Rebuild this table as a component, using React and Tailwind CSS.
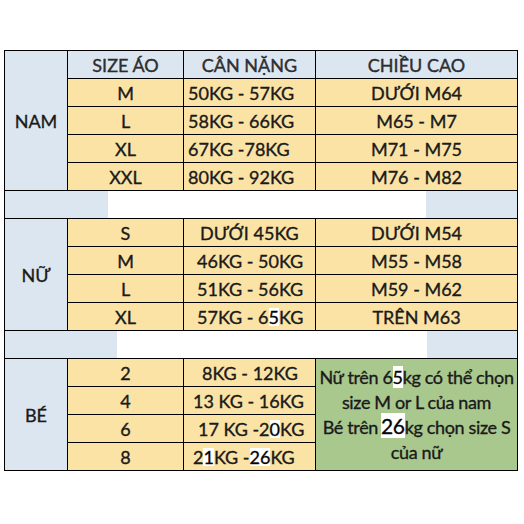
import React from "react";

const BLUE = "bg-[#dce6f1]";
const GOLD = "bg-[#fbe3a5]";

// a white patch over a character, like the edits in the source chart
function Fix({ children, className = "" }) {
  return <span className={`bg-white text-black ${className}`}>{children}</span>;
}

const nam = [
  { size: "M", kg: "50KG - 57KG", pl: "pl-[4px]", cao: "DƯỚI M64" },
  { size: "L", kg: "58KG - 66KG", pl: "pl-[4px]", cao: "M65 - M7" },
  { size: "XL", kg: "67KG -78KG", pl: "pl-[4px]", cao: "M71 - M75" },
  { size: "XXL", kg: "80KG - 92KG", pl: "pl-[4px]", cao: "M76 - M82" },
];

const nu = [
  { size: "S", kg: "DƯỚI 45KG", pl: "pl-[16px]", cao: "DƯỚI M54" },
  { size: "M", kg: "46KG - 50KG", pl: "pl-[13px]", cao: "M55 - M58" },
  { size: "L", kg: "51KG - 56KG", pl: "pl-[13px]", cao: "M59 - M62" },
  { size: "XL", kg: <>57KG - 6<Fix>5</Fix>KG</>, pl: "pl-[13px]", cao: "TRÊN M63" },
];

const be = [
  { size: "2", kg: "8KG - 12KG", pl: "pl-[18px]" },
  { size: "4", kg: "13 KG - 16KG", pl: "pl-[9px]" },
  { size: "6", kg: <>17 KG -2<Fix>0</Fix>KG</>, pl: "pl-[14px]" },
  { size: "8", kg: <>2<Fix>1</Fix> KG -<Fix>26</Fix>KG</>, pl: "pl-[9px]" },
];

function Cell({ className = "", children }) {
  return <div className={`flex items-center ${className}`}>{children}</div>;
}

function Rows({ rows }) {
  return rows.map((r, i) => (
    <React.Fragment key={i}>
      <Cell className={`${GOLD} justify-center`}>{r.size}</Cell>
      <Cell className={`${GOLD} ${r.pl} whitespace-nowrap`}>{r.kg}</Cell>
      {r.cao && <Cell className={`${GOLD} justify-center`}>{r.cao}</Cell>}
    </React.Fragment>
  ));
}

function Spacer({ left, right }) {
  return (
    <div className="col-span-4 flex">
      <div className={`${BLUE} ${left}`} />
      <div className="flex-1 bg-white" />
      <div className={`${BLUE} ${right}`} />
    </div>
  );
}

export default function App() {
  return (
    <div className="w-[524px] h-[524px] bg-white pt-[50px] pl-[4px] font-['Lato',sans-serif] text-[18px] text-[#1a1a1a] [-webkit-text-stroke:0.35px_#1a1a1a]">
      <div className="grid w-[514px] grid-cols-[62px_115px_131px_201px] grid-rows-[repeat(15,27px)] gap-px bg-black p-px leading-none">
        <Cell className={`${BLUE} row-span-5 justify-center`}>NAM</Cell>
        <Cell className={`${BLUE} justify-center text-[#333]`}>SIZE ÁO</Cell>
        <Cell className={`${BLUE} justify-center text-[#333]`}>CÂN NẶNG</Cell>
        <Cell className={`${BLUE} justify-center text-[#333]`}>CHIỀU CAO</Cell>
        <Rows rows={nam} />

        <Spacer left="w-[103px]" right="w-[91px]" />

        <Cell className={`${BLUE} row-span-4 justify-center`}>NỮ</Cell>
        <Rows rows={nu} />

        <Spacer left="w-[112px]" right="w-[90px]" />

        <Cell className={`${BLUE} row-span-4 justify-center`}>BÉ</Cell>
        {be.map((r, i) => (
          <React.Fragment key={i}>
            <Cell className={`${GOLD} justify-center`}>{r.size}</Cell>
            <Cell className={`${GOLD} ${r.pl} whitespace-nowrap`}>{r.kg}</Cell>
            {i === 0 && (
              <div className="row-span-4 flex flex-col items-center justify-center whitespace-nowrap bg-[#a9c88e] text-[18px] leading-[24.5px] tracking-[-0.35px] text-center">
                <div>Nữ trên 6<Fix>5</Fix>kg có thể chọn</div>
                <div>size M or L của nam</div>
                <div>Bé trên<Fix className="ml-[3px] text-[21px]">26</Fix>kg chọn size S</div>
                <div>của nữ</div>
              </div>
            )}
          </React.Fragment>
        ))}
      </div>
    </div>
  );
}
